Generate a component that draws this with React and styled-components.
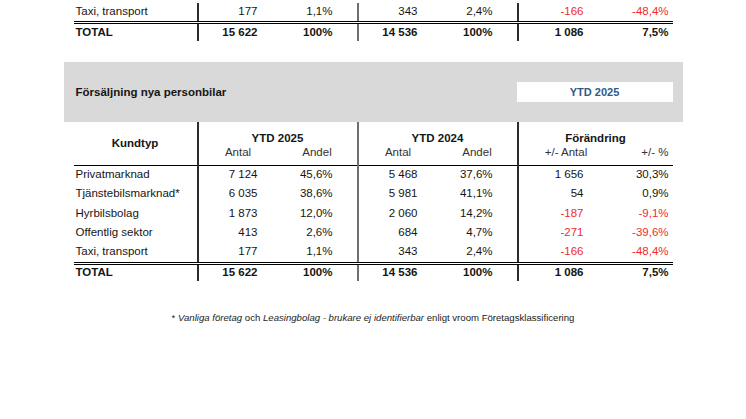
import styled, { createGlobalStyle } from 'styled-components'

const GlobalStyle = createGlobalStyle`
  body {
    margin: 0;
    background: #fff;
    font-family: "Liberation Sans", Arial, sans-serif;
    color: #111;
  }
`

const rows = [
  { name: 'Privatmarknad', a25: '7 124', p25: '45,6%', a24: '5 468', p24: '37,6%', diff: '1 656', pct: '30,3%' },
  { name: 'Tjänstebilsmarknad*', a25: '6 035', p25: '38,6%', a24: '5 981', p24: '41,1%', diff: '54', pct: '0,9%' },
  { name: 'Hyrbilsbolag', a25: '1 873', p25: '12,0%', a24: '2 060', p24: '14,2%', diff: '-187', pct: '-9,1%', neg: true },
  { name: 'Offentlig sektor', a25: '413', p25: '2,6%', a24: '684', p24: '4,7%', diff: '-271', pct: '-39,6%', neg: true },
  { name: 'Taxi, transport', a25: '177', p25: '1,1%', a24: '343', p24: '2,4%', diff: '-166', pct: '-48,4%', neg: true },
]

const total = { name: 'TOTAL', a25: '15 622', p25: '100%', a24: '14 536', p24: '100%', diff: '1 086', pct: '7,5%' }

const lineColor = { dark: '#2b2b2b', gray: '#6f6f6f' }

function Cols() {
  return (
    <colgroup>
      <col style={{ width: 124 }} />
      <col style={{ width: 80 }} />
      <col style={{ width: 80 }} />
      <col style={{ width: 80 }} />
      <col style={{ width: 80 }} />
      <col style={{ width: 96 }} />
      <col style={{ width: 59 }} />
    </colgroup>
  )
}

function DataRow({ r, isTotal }) {
  return (
    <Row $total={isTotal}>
      <Td $left $bold={isTotal} $total={isTotal}>{r.name}</Td>
      <Td $line="dark" $pr={20} $bold={isTotal} $total={isTotal}>{r.a25}</Td>
      <Td $pr={24} $bold={isTotal} $total={isTotal}>{r.p25}</Td>
      <Td $line="gray" $pr={20} $bold={isTotal} $total={isTotal}>{r.a24}</Td>
      <Td $pr={24} $bold={isTotal} $total={isTotal}>{r.p24}</Td>
      <Td $line="dark" $pr={30} $bold={isTotal} $total={isTotal} $red={r.neg}>{r.diff}</Td>
      <Td $pr={4} $bold={isTotal} $total={isTotal} $red={r.neg}>{r.pct}</Td>
    </Row>
  )
}

export default function App() {
  return (
    <Page>
      <GlobalStyle />
      <Sheet>
        <Fragment>
          <Table>
            <Cols />
            <tbody>
              <DataRow r={rows[4]} />
              <DataRow r={total} isTotal />
            </tbody>
          </Table>
        </Fragment>

        <Band>
          <Title>Försäljning nya personbilar</Title>
          <PeriodBox>YTD 2025</PeriodBox>
        </Band>

        <Table>
          <Cols />
          <thead>
            <HeadRow $h={23}>
              <Th rowSpan={2} $rule>Kundtyp</Th>
              <Th colSpan={2} $line="dark">YTD 2025</Th>
              <Th colSpan={2} $line="gray">YTD 2024</Th>
              <Th colSpan={2} $line="dark">Förändring</Th>
            </HeadRow>
            <HeadRow $h={21}>
              <Sub $line="dark">Antal</Sub>
              <Sub>Andel</Sub>
              <Sub $line="gray">Antal</Sub>
              <Sub>Andel</Sub>
              <Sub $line="dark">+/- Antal</Sub>
              <Sub $right>+/- %</Sub>
            </HeadRow>
          </thead>
          <tbody>
            {rows.map((r) => (
              <DataRow key={r.name} r={r} />
            ))}
            <DataRow r={total} isTotal />
          </tbody>
        </Table>

        <Note>
          * <em>Vanliga företag</em> och <em>Leasingbolag - brukare ej identifierbar</em> enligt vroom Företagsklassificering
        </Note>
      </Sheet>
    </Page>
  )
}

const Page = styled.div`
  width: 746px;
  height: 419px;
  overflow: hidden;
  background: #fff;
`

const Sheet = styled.div`
  width: 619px;
  margin: 0 auto;
`

const Fragment = styled.div`
  padding-top: 3px;
  margin-bottom: 21px;
`

const Table = styled.table`
  width: 599px;
  margin: 0 10px;
  table-layout: fixed;
  border-collapse: collapse;
  border-spacing: 0;
  font-size: 11.5px;
`

const Row = styled.tr`
  height: ${(p) => (p.$total ? '18px' : '19.5px')};
`

const Td = styled.td`
  padding: 0 ${(p) => (p.$pr ? `${p.$pr}px` : '0')} ${(p) => (p.$total ? '0' : '2px')} ${(p) => (p.$left ? '2px' : '0')};
  text-align: ${(p) => (p.$left ? 'left' : 'right')};
  font-weight: ${(p) => (p.$bold ? 700 : 400)};
  color: ${(p) => (p.$red ? '#f42a2a' : '#151515')};
  border-left: ${(p) => (p.$line ? `2px solid ${lineColor[p.$line]}` : 'none')};
  border-top: ${(p) => (p.$total ? '3px double #000' : 'none')};
  white-space: nowrap;
  vertical-align: middle;
  line-height: 13px;
`

const HeadRow = styled.tr`
  height: ${(p) => p.$h}px;
`

const Th = styled.th`
  padding: 0;
  text-align: center;
  font-weight: 700;
  color: #151515;
  vertical-align: ${(p) => (p.$rule ? 'middle' : 'bottom')};
  border-left: ${(p) => (p.$line ? `2px solid ${lineColor[p.$line]}` : 'none')};
  border-bottom: ${(p) => (p.$rule ? '1px solid #000' : 'none')};
  line-height: 13px;
`

const Sub = styled.th`
  padding: 0 ${(p) => (p.$right ? '4px' : '0')} 4px 0;
  text-align: ${(p) => (p.$right ? 'right' : 'center')};
  font-weight: 400;
  color: #333;
  vertical-align: middle;
  border-left: ${(p) => (p.$line ? `2px solid ${lineColor[p.$line]}` : 'none')};
  border-bottom: 1px solid #000;
  line-height: 13px;
`

const Band = styled.div`
  height: 60px;
  background: #d9d9d9;
  display: flex;
  align-items: center;
  justify-content: space-between;
  padding: 0 10px 0 12px;
`

const Title = styled.div`
  font-size: 11.5px;
  font-weight: 700;
  color: #151515;
`

const PeriodBox = styled.div`
  width: 156px;
  height: 20px;
  background: #fff;
  display: flex;
  align-items: center;
  justify-content: center;
  font-size: 11px;
  font-weight: 700;
  color: #2e5a88;
`

const Note = styled.div`
  margin-top: 31px;
  text-align: center;
  font-size: 9.6px;
  color: #222;

  em {
    font-style: italic;
  }
`
